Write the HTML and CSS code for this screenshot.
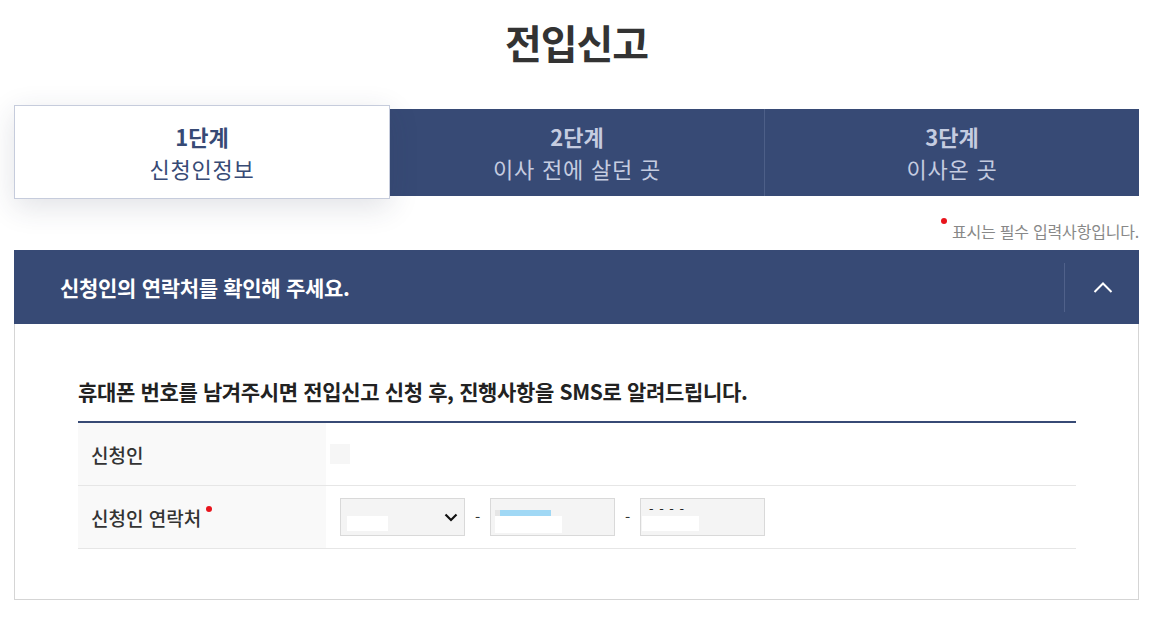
FILE: index.html
```html
<!DOCTYPE html>
<html lang="ko">
<head>
<meta charset="utf-8">
<title>전입신고</title>
<link rel="stylesheet" href="styles.css">
</head>
<body>
<div class="page">
  <h1 class="title">전입신고</h1>

  <ol class="steps">
    <li class="step active"><strong>1단계</strong><span>신청인정보</span></li>
    <li class="step"><strong>2단계</strong><span>이사 전에 살던 곳</span></li>
    <li class="step"><strong>3단계</strong><span>이사온 곳</span></li>
  </ol>

  <p class="req-note"><i class="dot"></i>표시는 필수 입력사항입니다.</p>

  <section class="panel">
    <header class="panel-head">
      <h2>신청인의 연락처를 확인해 주세요.</h2>
      <button class="toggle" type="button" aria-label="접기">
        <svg width="20" height="12" viewBox="0 0 20 12"><path d="M1.5 11 L10 2.5 L18.5 11" fill="none" stroke="#fff" stroke-width="2"/></svg>
      </button>
    </header>
    <div class="panel-body">
      <p class="lead">휴대폰 번호를 남겨주시면 전입신고 신청 후, 진행사항을 SMS로 알려드립니다.</p>
      <div class="form-table">
        <div class="row">
          <div class="label">신청인</div>
          <div class="value"><span class="name-box"></span></div>
        </div>
        <div class="row">
          <div class="label">신청인 연락처<i class="dot sup"></i></div>
          <div class="value phone">
            <div class="field select">
              <span class="mask m1"></span>
              <svg class="chev" width="14" height="9" viewBox="0 0 14 9"><path d="M1.5 1.5 L7 7 L12.5 1.5" fill="none" stroke="#111" stroke-width="2.2"/></svg>
            </div>
            <span class="dash">-</span>
            <div class="field">
              <span class="hl"></span>
              <span class="mask m2"></span>
            </div>
            <span class="dash">-</span>
            <div class="field">
              <span class="ticks">- - - -</span>
              <span class="mask m3"></span>
            </div>
          </div>
        </div>
      </div>
    </div>
  </section>
</div>
</body>
</html>
```

FILE: styles.css
```css
* { box-sizing: border-box; }
html, body { margin: 0; padding: 0; background: #fff; }
body {
  font-family: "Noto Sans CJK KR", "Noto Sans", sans-serif;
  color: #333;
}
.page {
  padding: 13px 15px 0 14px;
}
.title {
  margin: 0;
  text-align: center;
  font-size: 40px;
  line-height: 58px;
  font-weight: 700;
  color: #333;
  letter-spacing: -1px;
}
.steps {
  list-style: none;
  margin: 38px 0 0;
  padding: 0;
  display: flex;
  height: 87px;
  background: #374a75;
}
.step {
  flex: 1;
  display: flex;
  flex-direction: column;
  align-items: center;
  justify-content: center;
  padding-bottom: 1px;
  color: #c5cce0;
  font-size: 22px;
  line-height: 32px;
}
.step strong { font-weight: 700; }
.step span { font-weight: 400; letter-spacing: 0.8px; }
.step + .step { border-left: 1px solid #4d5f88; }
.step.active + .step { border-left: 0; }
.step.active {
  margin: -4px 0 -3px;
  padding-bottom: 0;
  background: #fff;
  color: #374a75;
  border: 1px solid #c6ccdc;
  box-shadow: 0 8px 28px rgba(40, 50, 80, 0.14);
  position: relative;
  z-index: 1;
}
.req-note {
  margin: 25px 0 9px;
  text-align: right;
  font-size: 16px;
  line-height: 20px;
  color: #888;
  letter-spacing: -0.2px;
}
.dot {
  display: inline-block;
  width: 6px;
  height: 6px;
  border-radius: 50%;
  background: #e8141c;
  vertical-align: top;
  margin: -3px 5px 0 0;
}
.panel-head {
  height: 74px;
  background: #374a75;
  display: flex;
  align-items: center;
  justify-content: space-between;
}
.panel-head h2 {
  margin: 0 0 0 46px;
  color: #fff;
  font-size: 21px;
  font-weight: 700;
  letter-spacing: -0.3px;
  line-height: 30px;
}
.toggle {
  width: 75px;
  height: 49px;
  border: 0;
  border-left: 1px solid #50618a;
  background: transparent;
  display: flex;
  align-items: center;
  justify-content: center;
  padding: 0 0 0 2px;
}
.panel-body {
  border: 1px solid #d5d5d5;
  border-top: 0;
  padding: 52px 62px 50px 63px;
}
.lead {
  margin: 0 0 15px;
  font-size: 21px;
  line-height: 30px;
  font-weight: 700;
  color: #222;
  letter-spacing: -0.35px;
}
.form-table {
  border-top: 2px solid #374a75;
}
.row {
  display: flex;
  border-bottom: 1px solid #e6e6e6;
  height: 63px;
}
.label {
  width: 248px;
  background: #f9f9f9;
  padding-left: 13px;
  display: flex;
  align-items: center;
  font-size: 19px;
  font-weight: 500;
  color: #333;
  letter-spacing: 0;
}
.label .dot.sup {
  margin: -16px 0 0 5px;
  vertical-align: baseline;
}
.value {
  flex: 1;
  display: flex;
  align-items: center;
}
.name-box {
  width: 20px;
  height: 20px;
  background: #f6f6f6;
  margin-left: 4px;
}
.phone { padding-left: 14px; }
.field {
  position: relative;
  width: 125px;
  height: 38px;
  background: #f4f4f4;
  border: 1px solid #d9d9d9;
}
.dash {
  width: 25px;
  text-align: center;
  font-size: 15px;
  color: #333;
  line-height: 20px;
}
.mask {
  position: absolute;
  background: #fff;
}
.m1 { left: 6px; top: 17px; width: 41px; height: 15px; }
.m2 { left: 4px; top: 17px; width: 67px; height: 17px; }
.m3 { left: 1px; top: 17px; width: 57px; height: 15px; }
.hl {
  position: absolute;
  left: 4px;
  top: 11px;
  width: 56px;
  height: 6px;
  background: linear-gradient(to right, #e6e6e6 0 5px, #a0d8f5 5px);
}
.ticks {
  position: absolute;
  left: 8px;
  top: 2px;
  font-size: 13px;
  line-height: 16px;
  color: #222;
  letter-spacing: 1px;
}
.chev {
  position: absolute;
  right: 6px;
  top: 14px;
}
```
